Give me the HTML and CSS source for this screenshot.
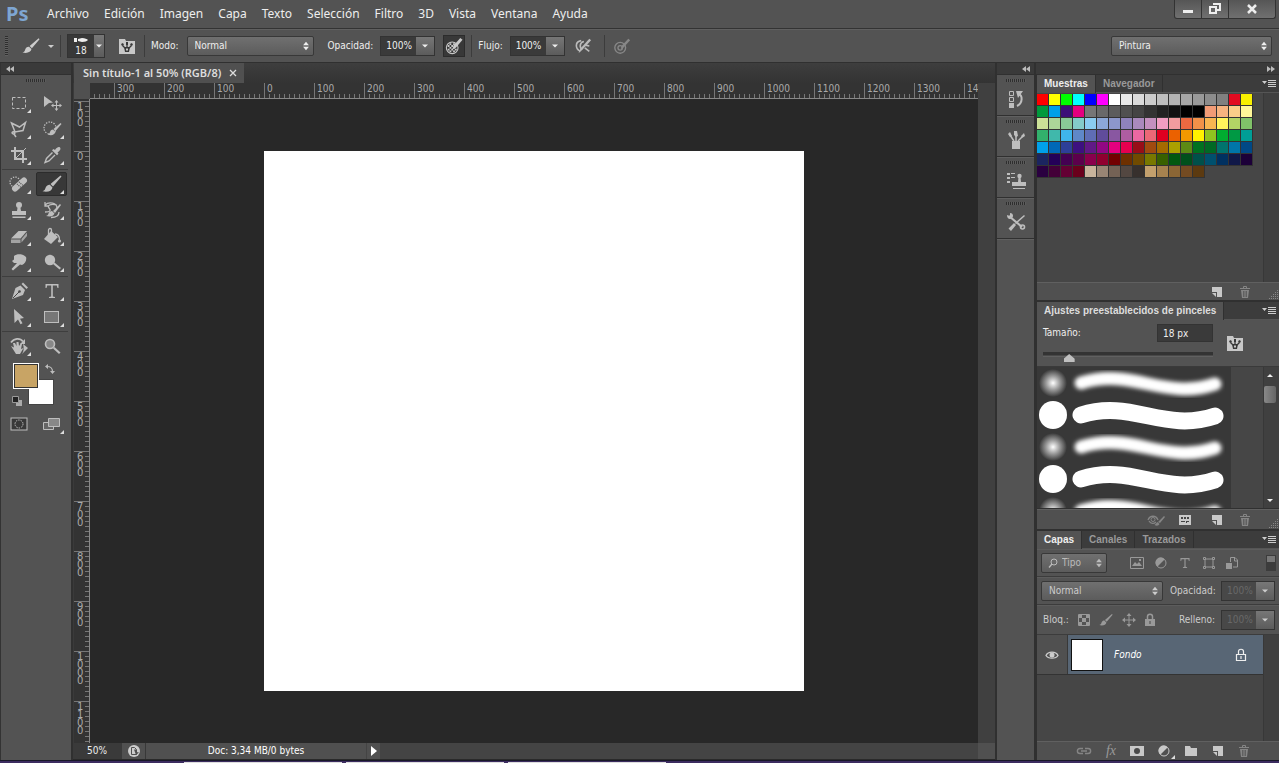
FILE: index.html
```html
<!DOCTYPE html>
<html lang="es">
<head>
<meta charset="utf-8">
<title>Sin título-1 al 50% (RGB/8)</title>
<link rel="stylesheet" href="styles.css">
</head>
<body>
<svg class="sprite" aria-hidden="true">
  <symbol id="i-updown" viewBox="0 0 8 12"><path d="M4 1l3.500 4h-7zM4 11l3.500-4h-7z"/></symbol>
  <symbol id="i-down" viewBox="0 0 8 4"><path d="M0 0h8L4 4z"/></symbol>
  <symbol id="i-up" viewBox="0 0 8 4"><path d="M0 4h8L4 0z"/></symbol>
  <symbol id="i-left2" viewBox="0 0 8 6"><path d="M4 0v6L0 3zM8 0v6L4 3z"/></symbol>
  <symbol id="i-right2" viewBox="0 0 8 6"><path d="M0 0v6l4-3zM4 0v6l4-3z"/></symbol>
  <symbol id="i-menu" viewBox="0 0 14 8"><path d="M0 1h5L2.500 4zM6 0h8v1H6zM6 2h8v1H6zM6 4h8v1H6zM6 6h8v1H6z"/></symbol>
  <symbol id="i-brush" viewBox="0 0 20 20"><path d="M18.500 1.500l1 1-8.500 10-2.500-2.500zM7.800 10.800l2.700 2.600c-.6 3.500-4.500 5.100-10 3.900 2.500-.8 2.500-2.100 3.300-4 .8-1.700 2.400-2.700 4-2.500z"/></symbol>
  <symbol id="i-folderbrush" viewBox="0 0 16 16"><path d="M0 1h6l1 2h9v13H0z"/><path d="M5 9h6l-1 5H6z" fill="#383838"/><path d="M8 10V6M6 10L3.500 7.500M10 10l2.500-2.500" stroke="#383838" stroke-width="1.300"/><path d="M2 6l2-1 1 2-2 1zM7 4h2v3H7zM12 5l2 1-1 2-2-1z" fill="#383838"/><path d="M7 10.500h2v2H7z"/></symbol>
  <symbol id="i-marquee" viewBox="0 0 20 20"><rect x="3.500" y="4.500" width="13" height="11" fill="none" stroke="currentColor" stroke-dasharray="3 2"/></symbol>
  <symbol id="i-move" viewBox="0 0 20 20"><path d="M2 3l9 6.500-4 .5-5 4z"/><path d="M14.500 8v9M10 12.500h9" stroke="currentColor"/><path d="M14.500 7l2 2.500h-4zM14.500 18l2-2.500h-4zM9 12.500l2.500-2v4zM20 12.500l-2.500-2v4z"/></symbol>
  <symbol id="i-lasso" viewBox="0 0 20 20"><path d="M2.500 4l8 4 6-4.500-2.500 8-8 1.500zM6 13c-3-1-4 1.500-1.500 2 2 0 1.500-2 0-1.500M5 15l2 3" fill="none" stroke="currentColor" stroke-width="1.500"/></symbol>
  <symbol id="i-quick" viewBox="0 0 20 20"><circle cx="8" cy="9" r="6" fill="none" stroke="currentColor" stroke-width="1.300" stroke-dasharray="1.300 1.300"/><path d="M18.500 4l1 1-6 7-2-2zM11 10.500l2.500 2.500c-1 3-4 4-8 2.500 2-.6 2-1.500 2.600-2.800.6-1.300 1.700-2.200 2.900-2.200z"/></symbol>
  <symbol id="i-crop" viewBox="0 0 20 20"><path d="M6 2v12h12M2 6h12v12" fill="none" stroke="currentColor" stroke-width="2"/><path d="M17 3L7 13" fill="none" stroke="currentColor" stroke-width="1"/></symbol>
  <symbol id="i-dropper" viewBox="0 0 20 20"><path d="M13 5c2-3 4-3.500 5-2.500s.5 3-2.500 5l1 1.200-1.500 1.500-5-5L11.500 4z"/><path d="M10.500 7.500l-6 6L3 17.500l4-1.500 6-6" fill="none" stroke="currentColor" stroke-width="1.400"/></symbol>
  <symbol id="i-heal" viewBox="0 0 20 20"><circle cx="6" cy="8" r="5" fill="none" stroke="currentColor" stroke-width="1.300" stroke-dasharray="1.300 1.300"/><rect x="1.500" y="7.500" width="18" height="6" rx="3" transform="rotate(-42 10.500 10.500)"/><path d="M8 10l4 3.500M10 8l4 3.500" stroke="#555" stroke-width="1.200" stroke-dasharray="1 1"/></symbol>
  <symbol id="i-stamp" viewBox="0 0 20 20"><circle cx="10" cy="5" r="3"/><path d="M8.800 6h2.400l.8 5h5v4H3v-4h5zM3.500 16.500h13v1.500h-13z"/></symbol>
  <symbol id="i-history" viewBox="0 0 20 20"><path d="M3 5c4-4 12-2 12 3M3 2v4h4M15 5C8 3 5 6 7 8s2 4-4 4M17 12c0 4-4 5.500-8 5.500" fill="none" stroke="currentColor" stroke-width="1.300"/><path d="M18 4l1 1-6 8-2-2zM10 11l2.500 2.500c-1 3-4.500 3.500-8.500 2.500 2-.6 2-1.500 2.600-2.800C7.200 12 8.500 11 10 11z"/></symbol>
  <symbol id="i-eraser" viewBox="0 0 20 20"><path d="M2 12.500L9.500 5H18l-6.500 7.500z"/><path d="M2 13.500h9.500v3.500H2zM12.500 13L18 6.500V10l-5.500 6.500z" opacity=".75"/></symbol>
  <symbol id="i-bucket" viewBox="0 0 20 20"><path d="M9 5l7 6-7 7-7-5z"/><path d="M6.500 9V4c0-2 3-2 3 0v4M13 8c4 0 4.500 3 4.500 6" fill="none" stroke="currentColor" stroke-width="1.300"/><circle cx="17.500" cy="15" r="1.600"/></symbol>
  <symbol id="i-smudge" viewBox="0 0 20 20"><path d="M5 4c3-3 10-2 12 1 1 3-1 7-4 8l-2-.5L4 18.500l-1.500-1.500L8 11H5l-2-2 2-1.500V6z"/></symbol>
  <symbol id="i-dodge" viewBox="0 0 20 20"><circle cx="8" cy="8" r="5.200"/><path d="M11 12l1.500-1.500L19 16l-1.500 1.500z"/></symbol>
  <symbol id="i-pen" viewBox="0 0 20 20"><path d="M12.500 3L14 1.500l5 5L17.500 8z"/><path d="M11.500 4.500l4.500 4.500-2 5L3 18 6.500 7z"/><path d="M4 17l6-6" stroke="#484848"/><circle cx="10.500" cy="10.500" r="1.300" fill="#484848"/></symbol>
  <symbol id="i-type" viewBox="0 0 20 20"><path d="M3.500 3h13v4h-1l-.7-2.500H10.800V15.500l2.200.5v1H7v-1l2.200-.5v-11H5.200L4.500 7h-1z"/></symbol>
  <symbol id="i-select" viewBox="0 0 20 20"><path d="M5 2l10 9-4 .7 2.500 4.500-2 1L9 12.500 5.500 16z"/></symbol>
  <symbol id="i-shape" viewBox="0 0 20 20"><rect x="2.500" y="4.500" width="14" height="11" fill="#777" stroke="currentColor"/></symbol>
  <symbol id="i-hand" viewBox="0 0 20 20"><path d="M2 10l3 1.500L4 7h2l1.500 3V6h2l.5 4 2-3 1 1-1 5 2.500-1-3.500 6H7z"/><path d="M2 6.500c3-4.500 9-5 12-1" fill="none" stroke="currentColor" stroke-width="1.800"/><path d="M16 3v5h-5zM14 8l5 4-6 6c2-3 2-6 1-10z"/></symbol>
  <symbol id="i-zoom" viewBox="0 0 20 20"><circle cx="8" cy="8" r="4.500" fill="#888" stroke="currentColor" stroke-width="1.600"/><path d="M11 12.500l1.500-1.500 6 5.500-1.500 1.500z"/></symbol>
  <symbol id="i-swap" viewBox="0 0 12 12"><path d="M3 3.500c4 0 5.500 1.500 5.500 5" fill="none" stroke="currentColor" stroke-width="1.200"/><path d="M4 1v5L1 3.500zM6 8h5l-2.500 3z"/></symbol>
  <symbol id="i-mask" viewBox="0 0 18 14"><rect x="1" y="1" width="16" height="12" fill="#383838" stroke="currentColor"/><circle cx="9" cy="7" r="4" fill="none" stroke="currentColor" stroke-dasharray="1.500 1"/></symbol>
  <symbol id="i-screen" viewBox="0 0 20 16"><path d="M1.500 6.500h10v7h-10z" fill="#666" stroke="currentColor"/><path d="M6.500 2.500h11v8h-11z" fill="#888" stroke="currentColor"/></symbol>
  <symbol id="i-target" viewBox="0 0 20 20"><circle cx="8" cy="12" r="6" fill="none" stroke="currentColor" stroke-width="1.500"/><circle cx="8" cy="12" r="2.500" fill="none" stroke="currentColor" stroke-width="1.500"/><path d="M17 2l2 1.500-7 8-3.500 2 1.500-4z"/></symbol>
  <symbol id="i-checker" viewBox="0 0 20 20"><circle cx="8" cy="12" r="6.500" fill="none" stroke="currentColor" stroke-width="1.200"/><path d="M5 7h2v2H5zM9 7h2v2H9zM3 9h2v2H3zM7 9h2v2H7zM5 11h2v2H5zM9 12h2v1H9zM3 13h2v2H3zM7 13h2v2H7zM11 13h2v2h-2zM5 15h2v2H5zM9 15h2v2H9z"/><path d="M17 1l2.500 2-7.500 9-4 2 1.500-4.500z"/></symbol>
  <symbol id="i-air" viewBox="0 0 20 20"><path d="M8 4c-7 1-7 9-1 12M11 5c-5 1-5 7-2 9M12 12l5 4M13 9l4 1" fill="none" stroke="currentColor" stroke-width="1.800"/><path d="M17 2l2 1.500-10 11L5 18l2-5z"/></symbol>
  <symbol id="i-histpanel" viewBox="0 0 20 20"><path d="M3.500 2.500h4v4h-4zM3.500 8.500h4v4h-4z" fill="none" stroke="currentColor"/><path d="M3 14h5v5H3z"/><path d="M12 5c5 1 5 9-1 12" fill="none" stroke="currentColor" stroke-width="2"/><path d="M10 2h7l-5 7z"/></symbol>
  <symbol id="i-brushes" viewBox="0 0 20 20"><path d="M6 11h8v8H6z"/><path d="M8 11L4 5M10 11V4M12 11l4-4" stroke="currentColor" stroke-width="1.500"/><path d="M2 4l2-2 2 4-2 1zM8 1h3l1 5-2 1-2-2zM15 6l3-3 1 3-3 2z"/></symbol>
  <symbol id="i-clone" viewBox="0 0 20 20"><path d="M1 2h3v2H1zM5 2h4v1H5zM1 6h3v2H1zM5 6h4v1H5zM1 10h3v2H1zM12.500 6h2l.5 5h5v4H6v-4h6zM7 17h12v1H7z"/><circle cx="13.500" cy="5" r="2.200"/></symbol>
  <symbol id="i-tools" viewBox="0 0 20 20"><path d="M3 4l13 11" stroke="currentColor" stroke-width="2.200"/><path d="M1 3l3 1V1c3 0 4 3 2 5S1 7 1 3zM18 3l1 1-9 8-1-1zM8 11l2 2-5 6-2.500-2.500z"/><circle cx="16.500" cy="15" r="2" fill="none" stroke="currentColor" stroke-width="1.600"/></symbol>
  <symbol id="i-new" viewBox="0 0 12 12"><path d="M1 1h10v10H6V6H1zM1 7h4v4z"/></symbol>
  <symbol id="i-trash" viewBox="0 0 12 12"><path d="M4.500 2V.5h3V2M1 2.500h10" fill="none" stroke="currentColor"/><path d="M2 4h8l-1 8H3z"/><path d="M4.500 5v6M6 5v6M7.500 5v6" stroke="#505050" stroke-width=".7"/></symbol>
  <symbol id="i-grip" viewBox="0 0 10 10"><path d="M8 0h1v1H8zM6 2h1v1H6zM8 2h1v1H8zM4 4h1v1H4zM6 4h1v1H6zM8 4h1v1H8zM2 6h1v1H2zM4 6h1v1H4zM6 6h1v1H6zM8 6h1v1H8zM0 8h1v1H0zM2 8h1v1H2zM4 8h1v1H4zM6 8h1v1H6zM8 8h1v1H8z"/></symbol>
  <symbol id="i-eyebrush" viewBox="0 0 18 12"><path d="M1 6c2-5 8-5 10 0M2 7c2 3 5 3 7 1" fill="none" stroke="currentColor" stroke-width="1.300"/><circle cx="6" cy="5.500" r="2" fill="none" stroke="currentColor"/><path d="M17 2l1 1-5 6-2-1zM10.500 8l2 2c-1 2-3 2-5 1z"/></symbol>
  <symbol id="i-presets" viewBox="0 0 12 10"><path d="M0 0h12v10H0z"/><path d="M2 2h2v2H2zM5 2h2v2H5zM8 2h2v2H8zM2 6h4v1H2zM7 6h3v1H8v1H7z" fill="#444"/></symbol>
  <symbol id="i-search" viewBox="0 0 10 10"><circle cx="6" cy="4" r="3" fill="none" stroke="currentColor"/><path d="M4 6L1 9.500" stroke="currentColor" stroke-width="1.300"/></symbol>
  <symbol id="i-image" viewBox="0 0 14 12"><path d="M.5.500h13v11H.5z" fill="none" stroke="currentColor"/><path d="M2 9l3-4 2 2 2-2 3 4zM9 2h2v2H9z"/></symbol>
  <symbol id="i-adjust" viewBox="0 0 12 12"><circle cx="6" cy="6" r="5" fill="none" stroke="currentColor"/><path d="M9.500 2.500A5 5 0 1 0 2.500 9.500z"/></symbol>
  <symbol id="i-vector" viewBox="0 0 12 12"><path d="M2 2h8v8H2z" fill="none" stroke="currentColor"/><path d="M.5.500h2v2h-2zM9.500.500h2v2h-2zM.5 9.500h2v2h-2zM9.500 9.500h2v2h-2z" fill="#535353" stroke="currentColor"/></symbol>
  <symbol id="i-smart" viewBox="0 0 12 12"><path d="M4.500 5V.5H9L11.500 3v7H7M8.500 1v3H11" fill="none" stroke="currentColor"/><path d="M0 6h6v6H0z"/></symbol>
  <symbol id="i-pixels" viewBox="0 0 12 12"><path d="M.5.500h11v11H.5z" fill="none" stroke="currentColor"/><path d="M1 1h3v3H1zM8 1h3v3H8zM4 4h4v4H4zM1 8h3v3H1zM8 8h3v3H8z"/></symbol>
  <symbol id="i-cross" viewBox="0 0 14 14"><path d="M7 2v10M2 7h10" stroke="currentColor"/><path d="M7 0l2.500 3h-5zM7 14l2.500-3h-5zM0 7l3-2.500v5zM14 7l-3-2.500v5z"/></symbol>
  <symbol id="i-lock" viewBox="0 0 12 14"><path d="M3.500 6V3.500c0-3 5-3 5 0V6" fill="none" stroke="currentColor" stroke-width="1.500"/><path d="M1 6h10v7H1z"/><path d="M5.500 8h1v3h-1z" fill="#484848"/></symbol>
  <symbol id="i-lockline" viewBox="0 0 12 14"><path d="M3.500 6V3.500c0-3 5-3 5 0V6M1.500 6.500h9v6h-9zM6 8v3" fill="none" stroke="currentColor" stroke-width="1.200"/></symbol>
  <symbol id="i-eye" viewBox="0 0 14 10"><path d="M1 5.500C3 1 11 1 13 5.500 11 9 3 9 1 5.500z" fill="none" stroke="currentColor" stroke-width="1.300"/><circle cx="7" cy="5" r="2.500"/></symbol>
  <symbol id="i-link" viewBox="0 0 16 8"><path d="M7 1.500H4c-3.500 0-3.500 5 0 5h3M9 1.500h3c3.500 0 3.500 5 0 5H9M5 4h6" fill="none" stroke="currentColor" stroke-width="1.400"/></symbol>
  <symbol id="i-addmask" viewBox="0 0 14 12"><path d="M0 1h14v10H0z"/><circle cx="7" cy="6" r="3" fill="#484848"/></symbol>
  <symbol id="i-folder" viewBox="0 0 14 12"><path d="M1 1h5l1 2h6v8H1z"/></symbol>
  <symbol id="i-export" viewBox="0 0 14 14"><circle cx="7" cy="7" r="6"/><path d="M4.500 10.500v-7h3l2 2v5z" fill="none" stroke="#505050"/><path d="M7 5.500h2.500V8L12 8.500 9 11z" fill="#505050"/></symbol>
  <symbol id="i-play" viewBox="0 0 6 10"><path d="M0 0l6 5-6 5z"/></symbol>
  <symbol id="i-close" viewBox="0 0 8 8"><path d="M1 1l6 6M7 1L1 7" stroke="currentColor" stroke-width="1.300"/></symbol>
  <symbol id="s-wave" viewBox="0 0 154 32"><path d="M10 16C61 0 93 34 144 17" fill="none" stroke="#fff" stroke-width="17" stroke-linecap="round"/></symbol>
  <symbol id="s-softwave" viewBox="0 0 154 32"><path d="M10 16C61 0 93 34 144 17" fill="none" stroke="#fff" stroke-width="13" stroke-linecap="round" filter="url(#soft)"/></symbol>
  <defs>
    <filter id="soft" x="-10%" y="-80%" width="120%" height="260%"><feGaussianBlur stdDeviation="2"/></filter>
  </defs>
</svg>

<header class="menubar">
  <span class="logo">Ps</span>
  <nav class="menus">
    <button>Archivo</button><button>Edición</button><button>Imagen</button><button>Capa</button><button>Texto</button><button>Selección</button><button>Filtro</button><button>3D</button><button>Vista</button><button>Ventana</button><button>Ayuda</button>
  </nav>
  <div class="window-controls">
    <button aria-label="Minimizar"><svg width="12" height="12"><path d="M1 7h10v3H1z"/></svg></button>
    <button aria-label="Restaurar"><svg width="14" height="12"><path d="M5 1h7v6H9M2 4h6v6H2z" fill="none" stroke="currentColor" stroke-width="2"/></svg></button>
    <button class="wide" aria-label="Cerrar"><svg width="12" height="12"><path d="M2 2l8 8M10 2l-8 8" stroke="currentColor" stroke-width="2.500"/></svg></button>
  </div>
</header>

<section class="options">
  <span class="vgrip"></span>
  <button class="current-tool" aria-label="Pincel"><svg width="20" height="18"><use href="#i-brush"/></svg><svg width="6" height="3"><use href="#i-down"/></svg></button>
  <span class="rule"></span>
  <div class="brush-pick">
    <span class="brush-size"><svg width="16" height="6"><path d="M1 1h3v4H1zM5 2l4-1c3 0 5 1 6 2-1 1-3 2-6 2L5 4z"/></svg>18</span>
    <button class="drop" aria-label="Elegir pincel"><svg width="6" height="4"><use href="#i-down"/></svg></button>
  </div>
  <button class="icon folder" aria-label="Panel de pincel"><svg width="16" height="16"><use href="#i-folderbrush"/></svg></button>
  <span class="rule"></span>
  <label for="mode">Modo:</label>
  <span class="select mode"><select id="mode"><option>Normal</option></select><svg width="8" height="10"><use href="#i-updown"/></svg></span>
  <label for="opacity" class="opacity-label">Opacidad:</label>
  <span class="combo"><input id="opacity" value="100%"><button class="drop" aria-label="Opacidad"><svg width="6" height="4"><use href="#i-down"/></svg></button></span>
  <button class="icon pressed" aria-label="Presión para opacidad"><svg width="18" height="18"><use href="#i-checker"/></svg></button>
  <span class="rule"></span>
  <label for="flow">Flujo:</label>
  <span class="combo"><input id="flow" value="100%"><button class="drop" aria-label="Flujo"><svg width="6" height="4"><use href="#i-down"/></svg></button></span>
  <button class="icon air" aria-label="Aerógrafo"><svg width="20" height="18"><use href="#i-air"/></svg></button>
  <span class="rule"></span>
  <button class="icon faded" aria-label="Presión para tamaño"><svg width="18" height="18"><use href="#i-target"/></svg></button>
  <span class="select workspace"><select aria-label="Espacio de trabajo"><option>Pintura</option></select><svg width="8" height="10"><use href="#i-updown"/></svg></span>
</section>

<main class="work">
  <aside class="tools">
    <div class="strip"><svg width="8" height="6"><use href="#i-left2"/></svg></div>
    <div class="hgrip"></div>
    <div class="tool-group">
      <button class="tool more" aria-label="Marco rectangular"><svg><use href="#i-marquee"/></svg></button>
      <button class="tool" aria-label="Mover"><svg><use href="#i-move"/></svg></button>
      <button class="tool more" aria-label="Lazo poligonal"><svg><use href="#i-lasso"/></svg></button>
      <button class="tool more" aria-label="Selección rápida"><svg><use href="#i-quick"/></svg></button>
      <button class="tool more" aria-label="Recortar"><svg><use href="#i-crop"/></svg></button>
      <button class="tool more" aria-label="Cuentagotas"><svg><use href="#i-dropper"/></svg></button>
    </div>
    <div class="tool-group">
      <button class="tool more" aria-label="Pincel corrector"><svg><use href="#i-heal"/></svg></button>
      <button class="tool more active" aria-label="Pincel"><svg><use href="#i-brush"/></svg></button>
      <button class="tool more" aria-label="Tampón de clonar"><svg><use href="#i-stamp"/></svg></button>
      <button class="tool more" aria-label="Pincel de historia"><svg><use href="#i-history"/></svg></button>
      <button class="tool more" aria-label="Borrador"><svg><use href="#i-eraser"/></svg></button>
      <button class="tool more" aria-label="Bote de pintura"><svg><use href="#i-bucket"/></svg></button>
      <button class="tool more" aria-label="Dedo"><svg><use href="#i-smudge"/></svg></button>
      <button class="tool more" aria-label="Sobreexponer"><svg><use href="#i-dodge"/></svg></button>
    </div>
    <div class="tool-group">
      <button class="tool more" aria-label="Pluma"><svg><use href="#i-pen"/></svg></button>
      <button class="tool more" aria-label="Texto"><svg><use href="#i-type"/></svg></button>
      <button class="tool more" aria-label="Selección de trazado"><svg><use href="#i-select"/></svg></button>
      <button class="tool more" aria-label="Rectángulo"><svg><use href="#i-shape"/></svg></button>
    </div>
    <div class="tool-group">
      <button class="tool more" aria-label="Rotar vista"><svg><use href="#i-hand"/></svg></button>
      <button class="tool" aria-label="Zoom"><svg><use href="#i-zoom"/></svg></button>
    </div>
    <div class="colors">
      <button class="back" aria-label="Color de fondo"></button>
      <button class="front" aria-label="Color frontal"></button>
      <button class="swap" aria-label="Intercambiar colores"><svg width="12" height="12"><use href="#i-swap"/></svg></button>
      <button class="reset" aria-label="Colores por defecto"><svg width="10" height="10"><path d="M4 4h6v6H4z" fill="#aaa"/><path d="M.5.500h6v6h-6z" fill="#222" stroke="#999"/></svg></button>
    </div>
    <div class="tool-group last">
      <button class="tool" aria-label="Máscara rápida"><svg class="small"><use href="#i-mask"/></svg></button>
      <button class="tool more" aria-label="Modo de pantalla"><svg><use href="#i-screen"/></svg></button>
    </div>
  </aside>

  <section class="document">
    <div class="doc-tabs"><div class="doc-tab">Sin título-1 al 50% (RGB/8)<button aria-label="Cerrar documento"><svg width="8" height="8"><use href="#i-close"/></svg></button></div></div>
    <div class="view">
      <div class="corner"></div>
      <div class="ruler-h" id="ruler-h"></div>
      <div class="ruler-v" id="ruler-v"></div>
      <div class="stage"><div class="canvas"></div></div>
      <div class="vscroll"></div>
    </div>
    <div class="status">
      <span class="zoom">50%</span>
      <button class="export" aria-label="Exportar"><svg width="14" height="14"><use href="#i-export"/></svg></button>
      <span class="size">Doc: 3,34 MB/0 bytes</span>
      <button class="play" aria-label="Más información"><svg width="6" height="10"><use href="#i-play"/></svg></button>
      <span class="hscroll"></span><span class="scroll-corner"></span>
    </div>
  </section>

  <aside class="icon-dock">
    <div class="strip end"><svg width="8" height="6"><use href="#i-left2"/></svg></div>
    <div class="dock-body">
      <button class="dock-item" aria-label="Historia"><i class="hgrip"></i><svg width="20" height="20"><use href="#i-histpanel"/></svg></button>
      <button class="dock-item" aria-label="Pincel"><i class="hgrip"></i><svg width="20" height="20"><use href="#i-brushes"/></svg></button>
      <button class="dock-item" aria-label="Origen de clonación"><i class="hgrip"></i><svg width="20" height="20"><use href="#i-clone"/></svg></button>
      <button class="dock-item" aria-label="Herramientas preestablecidas"><i class="hgrip"></i><svg width="20" height="20"><use href="#i-tools"/></svg></button>
    </div>
  </aside>

  <aside class="panels">
    <div class="strip end"><svg width="8" height="6"><use href="#i-right2"/></svg></div>

    <section class="panel">
      <div class="tabs"><button class="tab on">Muestras</button><button class="tab">Navegador</button><button class="panel-menu" aria-label="Menú de muestras"><svg width="14" height="8"><use href="#i-menu"/></svg></button></div>
      <div class="swatch-area"><div class="swatches" id="swatches"></div><div class="gutter"></div></div>
      <div class="panel-foot swatch-foot">
        <button aria-label="Nueva muestra"><svg width="12" height="12"><use href="#i-new"/></svg></button>
        <button class="dim" aria-label="Eliminar muestra"><svg width="12" height="12"><use href="#i-trash"/></svg></button>
        <svg class="grip" width="10" height="10"><use href="#i-grip"/></svg>
      </div>
    </section>

    <section class="panel">
      <div class="tabs"><button class="tab on soft">Ajustes preestablecidos de pinceles</button><button class="panel-menu" aria-label="Menú de pinceles"><svg width="14" height="8"><use href="#i-menu"/></svg></button></div>
      <div class="brush-size-row">
        <div class="size-controls">
          <div class="size-line"><label for="size">Tamaño:</label><input id="size" value="18 px"></div>
          <input class="slider" type="range" min="0" max="100" value="13" aria-label="Tamaño">
        </div>
        <button class="icon" aria-label="Panel de pincel"><svg width="16" height="16"><use href="#i-folderbrush"/></svg></button>
      </div>
      <div class="brush-list">
        <div class="brush-rows">
          <div class="brush-row"><i class="dot fuzzy"></i><svg width="154" height="32"><use href="#s-softwave"/></svg></div>
          <div class="brush-row"><i class="dot"></i><svg width="154" height="32"><use href="#s-wave"/></svg></div>
          <div class="brush-row"><i class="dot fuzzy"></i><svg width="154" height="32"><use href="#s-softwave"/></svg></div>
          <div class="brush-row"><i class="dot"></i><svg width="154" height="32"><use href="#s-wave"/></svg></div>
          <div class="brush-row"><i class="dot fuzzy"></i><svg width="154" height="32"><use href="#s-softwave"/></svg></div>
        </div>
        <div class="gutter bar"><svg width="6" height="3"><use href="#i-up"/></svg><i class="thumb"></i><svg width="6" height="3"><use href="#i-down"/></svg></div>
      </div>
      <div class="panel-foot brush-foot">
        <button class="dim" aria-label="Previsualizar"><svg width="18" height="12"><use href="#i-eyebrush"/></svg></button>
        <button class="presets" aria-label="Gestor de ajustes"><svg width="12" height="10"><use href="#i-presets"/></svg></button>
        <button aria-label="Nuevo pincel"><svg width="12" height="12"><use href="#i-new"/></svg></button>
        <button class="dim" aria-label="Eliminar pincel"><svg width="12" height="12"><use href="#i-trash"/></svg></button>
        <svg class="grip" width="10" height="10"><use href="#i-grip"/></svg>
      </div>
    </section>

    <section class="panel layers">
      <div class="tabs"><button class="tab on">Capas</button><button class="tab">Canales</button><button class="tab">Trazados</button><button class="panel-menu" aria-label="Menú de capas"><svg width="14" height="8"><use href="#i-menu"/></svg></button></div>
      <div class="layer-row filter-row">
        <span class="select kind"><svg class="lens" width="10" height="10"><use href="#i-search"/></svg><select aria-label="Tipo de filtro"><option>Tipo</option></select><svg width="8" height="10"><use href="#i-updown"/></svg></span>
        <div class="filters">
          <button aria-label="Píxeles"><svg width="14" height="12"><use href="#i-image"/></svg></button>
          <button aria-label="Ajuste"><svg width="12" height="12"><use href="#i-adjust"/></svg></button>
          <button aria-label="Texto"><svg width="14" height="14"><use href="#i-type"/></svg></button>
          <button aria-label="Forma"><svg width="12" height="12"><use href="#i-vector"/></svg></button>
          <button aria-label="Objeto inteligente"><svg width="12" height="12"><use href="#i-smart"/></svg></button>
        </div>
        <button class="toggle" aria-label="Activar filtro"></button>
      </div>
      <div class="layer-row blend-row">
        <span class="select blend"><select aria-label="Modo de fusión"><option>Normal</option></select><svg width="8" height="10"><use href="#i-updown"/></svg></span>
        <label for="lop">Opacidad:</label>
        <span class="combo off"><input id="lop" value="100%"><button class="drop" aria-label="Opacidad de capa"><svg width="6" height="4"><use href="#i-down"/></svg></button></span>
      </div>
      <div class="layer-row lock-row">
        <span class="lock-label">Bloq.:</span>
        <div class="locks">
          <button aria-label="Bloquear transparencia"><svg width="12" height="12"><use href="#i-pixels"/></svg></button>
          <button aria-label="Bloquear píxeles"><svg width="16" height="14"><use href="#i-brush"/></svg></button>
          <button aria-label="Bloquear posición"><svg width="14" height="14"><use href="#i-cross"/></svg></button>
          <button aria-label="Bloquear todo"><svg width="12" height="14"><use href="#i-lock"/></svg></button>
        </div>
        <label for="fill">Relleno:</label>
        <span class="combo off"><input id="fill" value="100%"><button class="drop" aria-label="Relleno de capa"><svg width="6" height="4"><use href="#i-down"/></svg></button></span>
      </div>
      <div class="layer-list">
        <div class="layer-items">
          <div class="layer">
            <button class="eye" aria-label="Visibilidad"><svg width="14" height="10"><use href="#i-eye"/></svg></button>
            <div class="layer-main"><i class="thumbnail"></i><em>Fondo</em><svg width="12" height="14"><use href="#i-lockline"/></svg></div>
          </div>
        </div>
        <div class="gutter"></div>
      </div>
      <div class="panel-foot layer-foot">
        <button class="dim" aria-label="Enlazar"><svg width="16" height="8"><use href="#i-link"/></svg></button>
        <button class="dim fx" aria-label="Estilos">fx</button>
        <button aria-label="Añadir máscara"><svg width="14" height="12"><use href="#i-addmask"/></svg></button>
        <button class="more" aria-label="Capa de ajuste"><svg width="12" height="12"><use href="#i-adjust"/></svg></button>
        <button aria-label="Nuevo grupo"><svg width="14" height="12"><use href="#i-folder"/></svg></button>
        <button aria-label="Nueva capa"><svg width="12" height="12"><use href="#i-new"/></svg></button>
        <button class="dim" aria-label="Eliminar capa"><svg width="12" height="12"><use href="#i-trash"/></svg></button>
      </div>
    </section>
  </aside>
</main>
<footer class="taskbar"><i></i><i></i><i></i></footer>
<script src="app.js"></script>
</body>
</html>
```

FILE: app.js
```js
const swatchRows = [
  "ff0000 ffff00 00ff00 00ffff 0000ff ff00ff ffffff e8e8e8 dadada cccccc bfbfbf b3b3b3 a6a6a6 999999 8c8c8c 808080 e00b20 f8f000",
  "009a3c 009fe8 3c1078 e4007f 767676 696969 5c5c5c 505050 444444 333333 222222 111111 000000 000000 f29b76 f6b37f facd89 fff799",
  "cce198 acd598 89c997 84ccc9 8accf0 8ca8d8 8c97cb 8f82bc aa89bd c490bf f19ec2 f29c9f ec6941 f19149 f8b551 fff45c b3d465 80c269",
  "32b16c 40b8ab 3fb5ec 5f88c8 5f6db5 604c9b 8957a1 ae5da1 ea68a2 eb6877 e00020 eb6100 f39800 fff100 8fc31f 00ac30 009944 009e96",
  "00a0e9 0068b7 2d3f98 3d1080 601986 920783 e4007f e5004f 980d18 a14a10 a56a00 aba000 5c8a14 007120 006924 00736d 0075a9 004886",
  "1b2560 240058 440052 5c004c 8a004c 90002f 720000 6e3000 704a00 787800 386000 005810 00501c 00504a 00506e 003060 101848 1c0038",
  "2a0040 430038 640034 6a001c c8b49c 988574 746255 534741 37302d c3a06d a6824f 8b6635 744b22 5c3a10"
];
const swatches = document.getElementById("swatches");
for (const color of swatchRows.join(" ").split(" ")) {
  const b = document.createElement("button");
  b.style.background = "#" + color;
  b.setAttribute("aria-label", "#" + color);
  swatches.append(b);
}

function fillRuler(id, labels) {
  const ruler = document.getElementById(id);
  for (const label of labels) {
    const mark = document.createElement("span");
    mark.textContent = label;
    ruler.append(mark);
  }
}
const steps = (from, to) => {
  const out = [];
  for (let n = from; n <= to; n += 100) out.push(Math.abs(n));
  return out;
};
fillRuler("ruler-h", [...steps(-300, 1300), "14"]);
fillRuler("ruler-v", steps(-100, 1100));
```

FILE: styles.css
```css
* { box-sizing: border-box; }
html, body { height: 100%; }
body {
  margin: 0;
  display: flex;
  flex-direction: column;
  overflow: hidden;
  background: #535353;
  color: #eee;
  font: 10px/14px "DejaVu Sans Condensed", "Noto Sans", sans-serif;
}
button, input, select { font: inherit; color: inherit; margin: 0; padding: 0; border: 0; border-radius: 0; background: none; outline: 0; }
svg { display: block; fill: currentColor; flex: none; }
.sprite { position: absolute; width: 0; height: 0; }

/* menu bar */
.menubar { display: flex; align-items: center; height: 29px; flex: none; border-bottom: 1px solid #333; }
.logo { width: 39px; padding-left: 6px; color: #7ea6d2; font: bold 20px/26px "Noto Sans", sans-serif; }
.menus { display: flex; gap: 15px; padding-left: 8px; font: 12px/16px "Noto Sans", sans-serif; }
.window-controls { display: flex; align-self: flex-start; margin: 0 3px 0 auto; height: 19px; border: 1px solid #333; border-top: 0; border-radius: 0 0 3px 3px; background: linear-gradient(#565656, #707070); }
.window-controls button { width: 27px; display: grid; place-items: center; border-right: 1px solid #333; }
.window-controls .wide { width: 46px; border-right: 0; }

/* options bar */
.options { display: flex; align-items: center; height: 34px; flex: none; padding: 0 7px 0 5px; border-top: 1px solid #606060; border-bottom: 1px solid #303030; }
.vgrip { width: 3px; height: 20px; background: repeating-linear-gradient(#2e2e2e 0 1px, #606060 1px 2px); }
.current-tool { display: flex; align-items: center; gap: 7px; margin-left: 13px; color: #ccc; }
.rule { width: 1px; height: 22px; background: #3c3c3c; margin: 0 6px; }
.brush-pick { display: flex; height: 24px; border: 1px solid #333; background: #383838; }
.brush-size { width: 26px; display: flex; flex-direction: column; align-items: center; gap: 1px; padding-top: 2px; }
.drop { width: 18px; display: grid; place-items: center; background: linear-gradient(#777, #5c5c5c); }
.brush-pick .drop { width: 10px; }
.icon { display: grid; place-items: center; width: 22px; height: 22px; color: #c8c8c8; }
.folder { margin-left: 11px; }
.pressed { background: #383838; border: 1px solid #2c2c2c; margin-left: 8px; }
.air { margin: 0 4px 0 7px; color: #bbb; }
.faded { color: #888; }
.select { position: relative; display: flex; align-items: center; border: 1px solid #383838; border-radius: 2px; background: linear-gradient(#707070, #5c5c5c); height: 20px; }
.select select { appearance: none; width: 100%; height: 100%; padding-left: 7px; }
.select > svg:last-child { position: absolute; right: 3px; pointer-events: none; }
.mode { width: 127px; margin-left: 8px; }
.opacity-label { margin-left: 14px; }
.combo { display: flex; margin-left: 7px; height: 20px; border: 1px solid #333; background: #3a3a3a; }
.combo input { width: 35px; padding-left: 5px; }
.workspace { width: 161px; margin-left: auto; }

/* work area */
.work { display: flex; flex: 1; min-height: 0; }
.strip { display: flex; align-items: center; height: 12px; flex: none; padding: 0 5px; background: #3a3a3a; color: #bbb; border-bottom: 1px solid #303030; }
.strip.end { justify-content: flex-end; padding: 0 4px; }
.hgrip { width: 20px; height: 3px; background: repeating-linear-gradient(90deg, #2e2e2e 0 1px, #5c5c5c 1px 2px); }

.tools { width: 73px; flex: none; border-left: 1px solid #333; border-right: 2px solid #303030; }
.tools > .hgrip { margin: 4px 0 8px 25px; }
.tool-group { display: grid; grid-template-columns: 33px 33px; grid-auto-rows: 26px; margin: 0 3px 1px 1px; padding-bottom: 1px; border-bottom: 1px solid #3e3e3e; color: #bebebe; }
.tool-group:nth-last-child(3), .tool-group.last { border-bottom-color: transparent; }
.tool { position: relative; display: grid; place-items: center; }
.tool svg { width: 20px; height: 20px; }
.tool svg.small { width: 18px; height: 14px; }
.tool.active { margin: 1px; background: #383838; border: 1px solid #2c2c2c; border-radius: 2px; }
.more { position: relative; }
.more::after { content: ""; position: absolute; right: 4px; bottom: 3px; border: 2px solid #ddd; border-top-color: transparent; border-left-color: transparent; }
.tool.active::after { right: 2px; bottom: 1px; }
.colors { position: relative; height: 47px; margin: 2px 0 1px; }
.colors button { position: absolute; }
.front { left: 12px; top: 0; width: 26px; height: 26px; border: 1px solid #fff; outline: 1px solid #333; outline-offset: -2px; background: #c8a465; }
.back { left: 27px; top: 16px; width: 26px; height: 26px; border: 1px solid #444; background: #fff; }
.swap { left: 43px; top: 0; color: #bbb; }
.reset { left: 11px; top: 33px; }

.document { flex: 1; min-width: 0; display: flex; flex-direction: column; background: #3a3a3a; }
.doc-tabs { display: flex; height: 20px; flex: none; padding-left: 1px; background: linear-gradient(#3e3e3e, #333); }
.doc-tab { display: flex; align-items: center; gap: 8px; padding: 0 7px 0 9px; background: #505050; font: 600 11px/14px "Noto Sans", sans-serif; color: #ddd; }
.doc-tab button { display: grid; place-items: center; }
.view { flex: 1; min-height: 0; display: grid; grid-template: 16px minmax(0, 1fr) / 16px minmax(0, 1fr) 17px; padding-left: 1px; }
.corner { grid-row: 1; grid-column: 1; background: #505050; }
.ruler-h { grid-row: 1; grid-column: 2; display: flex; overflow: hidden; padding-left: 24px; color: #aaa; border-bottom: 1px solid #888; background: repeating-linear-gradient(90deg, #777 0 1px, transparent 1px 5px) -1px 100% / 110% 4px no-repeat #333; }
.ruler-h span { flex: 0 0 50px; padding-left: 2px; border-left: 1px solid #777; line-height: 11px; }
.ruler-v { grid-row: 2; grid-column: 1; display: flex; flex-direction: column; overflow: hidden; padding-top: 2px; color: #aaa; border-right: 1px solid #888; background: repeating-linear-gradient(transparent 0 2px, #777 2px 3px, transparent 3px 5px) 100% 0 / 4px 100% no-repeat #333; font-family: "DejaVu Sans", sans-serif; }
.ruler-v span { flex: 0 0 50px; border-top: 1px solid #777; padding: 1px 5px 0 3px; line-height: 8px; word-break: break-all; }
.stage { grid-row: 2; grid-column: 2; display: grid; place-content: center; overflow: hidden; background: #282828; }
.canvas { width: 540px; height: 540px; background: #fff; }
.vscroll { grid-row: 1 / 3; grid-column: 3; background: #404040; }
.status { display: flex; height: 17px; flex: none; border-bottom: 1px solid #2a2a2a; }
.zoom { width: 49px; padding: 1px 0 0 14px; }
.export { width: 24px; display: grid; place-items: center; background: #505050; color: #ccc; border-right: 1px solid #383838; }
.size { width: 220px; padding-top: 1px; text-align: center; background: #505050; color: #fff; }
.play { width: 14px; display: grid; place-items: center; background: #505050; border-left: 1px solid #444; color: #fff; }
.hscroll { flex: 1; background: #444; }
.scroll-corner { width: 17px; background: #505050; }

.icon-dock { width: 41px; flex: none; display: flex; flex-direction: column; border-left: 2px solid #303030; border-right: 2px solid #303030; }
.dock-body { display: flex; flex-direction: column; }
.dock-item { height: 41px; display: flex; flex-direction: column; align-items: center; gap: 7px; padding-top: 4px; border-bottom: 1px solid #303030; box-shadow: 0 1px #606060; color: #bebebe; }

/* panels */
.panels { width: 243px; flex: none; display: flex; flex-direction: column; min-height: 0; }
.panel { flex: none; display: flex; flex-direction: column; border-left: 1px solid #303030; border-bottom: 2px solid #303030; }
.tabs { display: flex; height: 18px; flex: none; background: #3c3c3c; border-bottom: 1px solid #555; }
.tab { padding: 0 7px; border-right: 1px solid #303030; color: #999; font: bold 10px/14px "Liberation Sans", sans-serif; white-space: nowrap; }
.tab.on { background: #535353; color: #eee; margin-bottom: -1px; }
.tab.soft { color: #ddd; }
.panel-menu { margin-left: auto; padding-right: 3px; color: #ccc; }
.gutter { width: 16px; flex: none; background: #404040; border-left: 1px solid #383838; }
.swatch-area { display: flex; justify-content: space-between; height: 189px; background: #464646; }
.swatches { display: grid; grid-template-columns: repeat(18, 12px); grid-auto-rows: 12px; align-content: start; padding-top: 1px; }
.swatches button { border: solid #333; border-width: 0 1px 1px 0; }
.panel-foot { display: flex; align-items: center; justify-content: flex-end; height: 18px; flex: none; border-top: 1px solid #606060; background: #505050; color: #c8c8c8; }
.panel-foot button { display: grid; place-items: center; }
.panel-foot .dim { color: #858585; }
.grip { align-self: flex-end; color: #888; margin-left: 2px; }
.swatch-foot { gap: 16px; }
.brush-foot { gap: 16px; height: 20px; }
.presets { margin: 0 4px 0 -2px; }
.brush-size-row { display: flex; align-items: center; height: 47px; padding-left: 6px; gap: 11px; border-bottom: 1px solid #3a3a3a; }
.size-controls { width: 170px; }
.size-line { display: flex; justify-content: space-between; align-items: center; }
.size-line input { width: 56px; height: 18px; padding-left: 5px; background: #3a3a3a; border: 1px solid #333; }
.slider { appearance: none; display: block; width: 100%; height: 12px; margin-top: 8px; background: linear-gradient(#333 0 3px, #484848 3px 4px, #606060 4px) 0 2px / 100% 5px no-repeat; }
.slider::-webkit-slider-thumb { appearance: none; width: 11px; height: 8px; margin-top: 4px; background: #c0c0c0; clip-path: polygon(50% 0, 100% 60%, 100% 100%, 0 100%, 0 60%); }
.brush-list { display: flex; justify-content: space-between; height: 142px; background: #464646; overflow: hidden; border-bottom: 1px solid #303030; }
.brush-rows { width: 194px; background: #383838; }
.brush-row { display: flex; align-items: center; height: 32px; padding-left: 2px; gap: 4px; }
.dot { width: 28px; height: 28px; border-radius: 50%; background: #fff; }
.dot.fuzzy { background: radial-gradient(closest-side, #fff, #999 50%, #383838); }
.gutter.bar { display: flex; flex-direction: column; align-items: center; padding: 7px 3px 6px 0; color: #eee; }
.thumb { width: 12px; height: 17px; margin: 9px 0 auto; border-radius: 2px; background: linear-gradient(90deg, #888, #666); }

.layers { flex: 1; min-height: 0; border-bottom: 0; }
.layer-row { display: flex; align-items: center; height: 28px; flex: none; padding-left: 4px; border-bottom: 1px solid #3c3c3c; box-shadow: inset 0 1px #5c5c5c; color: #ccc; }
.lock-row { height: 30px; }
.kind { width: 66px; color: #bbb; }
.kind .lens { position: absolute; left: 6px; }
.kind select { padding-left: 20px; }
.filters { display: flex; align-items: center; gap: 11px; padding-left: 23px; color: #999; }
.toggle { width: 10px; height: 16px; margin-left: auto; margin-right: 3px; border: 1px solid #3c3c3c; background: linear-gradient(#777 0 45%, #3c3c3c 45%); }
.blend { width: 122px; }
.blend-row label { margin-left: 7px; }
.lock-row label { margin-left: auto; }
.blend-row .combo { margin-left: auto; margin-right: 4px; }
.lock-row .combo { margin-left: 6px; margin-right: 4px; }
.combo.off input { color: #686868; background: #484848; width: 34px; }
.lock-label { margin-left: 2px; }
.locks { display: flex; align-items: center; gap: 8px; padding-left: 9px; color: #999; }
.layer-list { flex: 1; display: flex; min-height: 0; background: #464646; }
.layer-items { flex: 1; }
.layer { display: flex; height: 40px; border-bottom: 1px solid #333; }
.eye { width: 31px; display: grid; place-items: center; background: #505050; border-right: 1px solid #383838; color: #ccc; }
.layer-main { flex: 1; display: flex; align-items: center; padding: 0 16px 0 3px; background: #586675; }
.thumbnail { width: 32px; height: 32px; background: #fff; border: 1px solid #111; }
.layer-main em { flex: 1; padding-left: 11px; color: #fff; }
.layer-foot { gap: 14px; padding-right: 29px; height: 19px; }
.layer-foot .more::after { right: -5px; bottom: -2px; }
.panel-foot .fx { font: italic 14px/16px "Liberation Serif", serif; color: #999; }

.taskbar { display: flex; flex: none; gap: 4px; height: 3px; padding: 1px 0 0 184px; border-top: 1px solid #181828; background: #3c2c60; }
.taskbar i { width: 158px; background: #ddd; }
```
